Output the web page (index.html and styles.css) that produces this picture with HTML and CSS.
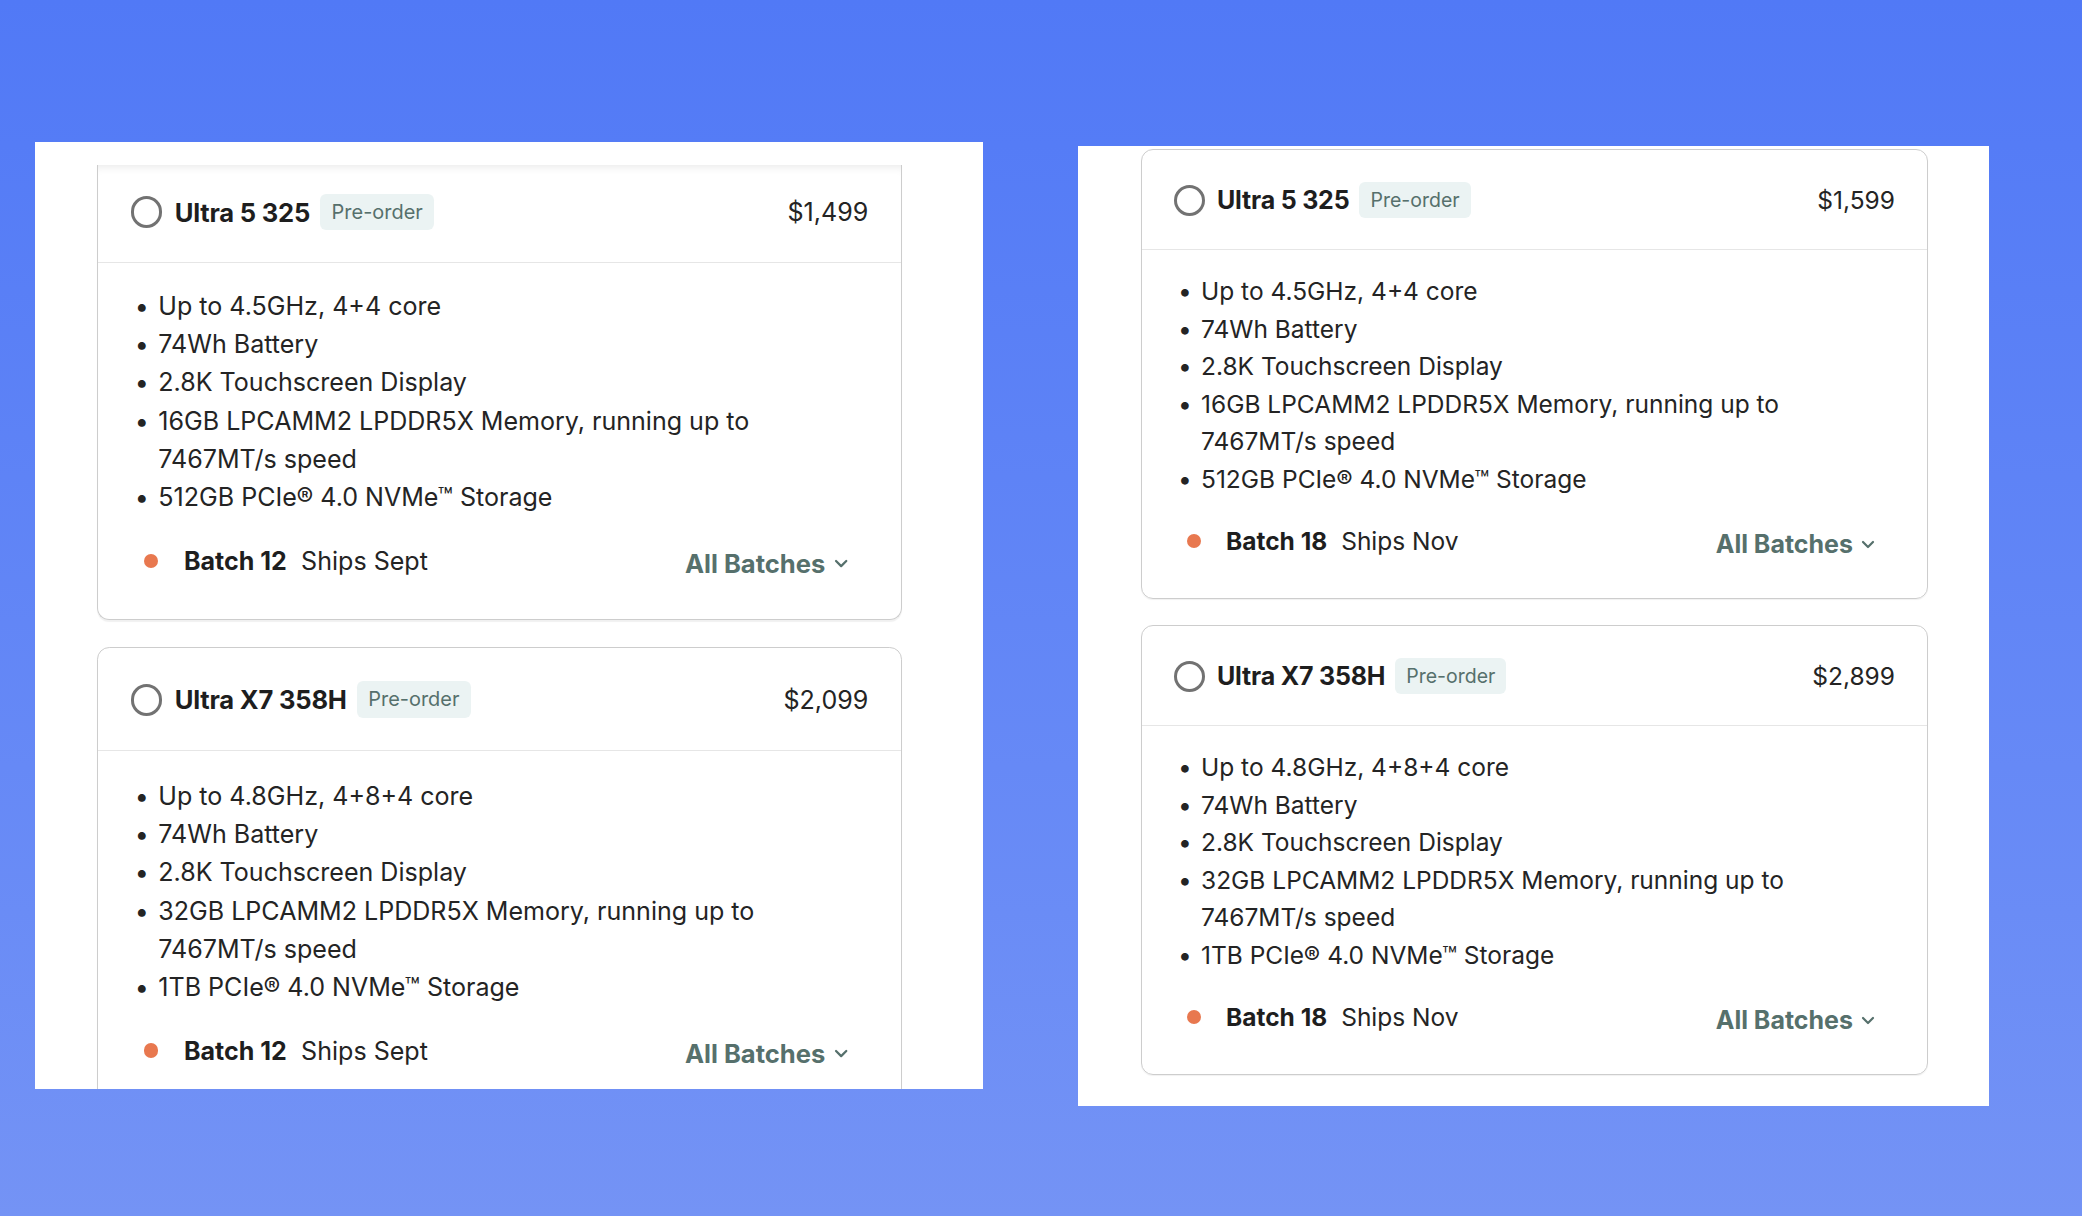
FILE: index.html
```html
<!DOCTYPE html>
<html lang="en">
<head>
    <meta charset="UTF-8">
    <title>Processor options</title>
    <link rel="stylesheet" href="styles.css">
</head>
<body>

<div class="stage">

    <!-- left screenshot: list scrolled a little, bottom card cut off -->
    <div class="panel panel-left">
        <div class="card card-cut">
            <div class="card-head">
                <span class="radio"></span>
                <span class="name">Ultra 5 325</span>
                <span class="badge">Pre-order</span>
                <span class="price">$1,499</span>
            </div>
            <div class="card-body">
                <ul class="specs">
                    <li>Up to 4.5GHz, 4+4 core</li>
                    <li>74Wh Battery</li>
                    <li>2.8K Touchscreen Display</li>
                    <li>16GB LPCAMM2 LPDDR5X Memory, running up to 7467MT/s speed</li>
                    <li>512GB PCIe® 4.0 NVMe™ Storage</li>
                </ul>
                <div class="batch">
                    <span class="dot"></span>
                    <b>Batch 12</b>
                    <span class="ships">Ships Sept</span>
                    <a class="all" href="#">All Batches
                        <svg width="14" height="9" viewBox="0 0 14 9"><path d="M2 2l5 5 5-5" fill="none" stroke="currentColor" stroke-width="2.2" stroke-linecap="round" stroke-linejoin="round"/></svg>
                    </a>
                </div>
            </div>
        </div>

        <div class="card">
            <div class="card-head">
                <span class="radio"></span>
                <span class="name">Ultra X7 358H</span>
                <span class="badge">Pre-order</span>
                <span class="price">$2,099</span>
            </div>
            <div class="card-body">
                <ul class="specs">
                    <li>Up to 4.8GHz, 4+8+4 core</li>
                    <li>74Wh Battery</li>
                    <li>2.8K Touchscreen Display</li>
                    <li>32GB LPCAMM2 LPDDR5X Memory, running up to 7467MT/s speed</li>
                    <li>1TB PCIe® 4.0 NVMe™ Storage</li>
                </ul>
                <div class="batch">
                    <span class="dot"></span>
                    <b>Batch 12</b>
                    <span class="ships">Ships Sept</span>
                    <a class="all" href="#">All Batches
                        <svg width="14" height="9" viewBox="0 0 14 9"><path d="M2 2l5 5 5-5" fill="none" stroke="currentColor" stroke-width="2.2" stroke-linecap="round" stroke-linejoin="round"/></svg>
                    </a>
                </div>
            </div>
        </div>
    </div>

    <!-- right screenshot -->
    <div class="panel panel-right">
        <div class="card">
            <div class="card-head">
                <span class="radio"></span>
                <span class="name">Ultra 5 325</span>
                <span class="badge">Pre-order</span>
                <span class="price">$1,599</span>
            </div>
            <div class="card-body">
                <ul class="specs">
                    <li>Up to 4.5GHz, 4+4 core</li>
                    <li>74Wh Battery</li>
                    <li>2.8K Touchscreen Display</li>
                    <li>16GB LPCAMM2 LPDDR5X Memory, running up to 7467MT/s speed</li>
                    <li>512GB PCIe® 4.0 NVMe™ Storage</li>
                </ul>
                <div class="batch">
                    <span class="dot"></span>
                    <b>Batch 18</b>
                    <span class="ships">Ships Nov</span>
                    <a class="all" href="#">All Batches
                        <svg width="14" height="9" viewBox="0 0 14 9"><path d="M2 2l5 5 5-5" fill="none" stroke="currentColor" stroke-width="2.2" stroke-linecap="round" stroke-linejoin="round"/></svg>
                    </a>
                </div>
            </div>
        </div>

        <div class="card">
            <div class="card-head">
                <span class="radio"></span>
                <span class="name">Ultra X7 358H</span>
                <span class="badge">Pre-order</span>
                <span class="price">$2,899</span>
            </div>
            <div class="card-body">
                <ul class="specs">
                    <li>Up to 4.8GHz, 4+8+4 core</li>
                    <li>74Wh Battery</li>
                    <li>2.8K Touchscreen Display</li>
                    <li>32GB LPCAMM2 LPDDR5X Memory, running up to 7467MT/s speed</li>
                    <li>1TB PCIe® 4.0 NVMe™ Storage</li>
                </ul>
                <div class="batch">
                    <span class="dot"></span>
                    <b>Batch 18</b>
                    <span class="ships">Ships Nov</span>
                    <a class="all" href="#">All Batches
                        <svg width="14" height="9" viewBox="0 0 14 9"><path d="M2 2l5 5 5-5" fill="none" stroke="currentColor" stroke-width="2.2" stroke-linecap="round" stroke-linejoin="round"/></svg>
                    </a>
                </div>
            </div>
        </div>
    </div>

</div>

</body>
</html>
```

FILE: styles.css
```css
*{
    margin: 0;
    padding: 0;
    box-sizing: border-box;
}
html, body{
    height: 100%;
}
body{
    background: linear-gradient(180deg, #5179f6 0%, #6a8cf6 75%, #7493f5 100%);
    font-family: Inter, "Noto Sans", sans-serif;
    color: #242424;
}
.stage{
    display: flex;
    align-items: flex-start;
    gap: 95px;
    padding: 142px 0 0 35px;
}
.panel{
    background: #fff;
    overflow: hidden;
}
.panel-left{
    width: 948px;
    height: 947px;
    padding: 23px 81px 0 62px;
}
/* left shot was taken a touch larger */
.panel-left .card{
    zoom: 1.023;
}
.panel-left .card + .card .card-head{
    padding-top: 33px;
}
.panel-left .card + .card .card-body{
    padding-top: 25px;
}
.panel-right{
    width: 911px;
    height: 960px;
    margin-top: 4px;
    padding: 3px 61px 0 63px;
}
.card{
    border: 1px solid #cdcdcd;
    border-radius: 12px;
    box-shadow: 0 1px 1px rgba(0,0,0,.06);
    margin-bottom: 26px;
}
/* top of this card is scrolled under a sticky bar */
.card-cut{
    border-top: 0;
    border-radius: 0 0 12px 12px;
    box-shadow: inset 0 8px 8px -6px rgba(0,0,0,.09), 0 1px 1px rgba(0,0,0,.06);
}
.card-head{
    display: flex;
    align-items: center;
    padding: 32px 32px 31px 32px;
    border-bottom: 1px solid #e6e6e6;
}
.card-cut .card-head{
    padding-top: 28px;
}
.radio{
    width: 31px;
    height: 31px;
    border: 3px solid #727272;
    border-radius: 50%;
    margin-right: 12px;
    flex-shrink: 0;
}
.name{
    font-size: 25px;
    font-weight: 700;
    color: #1e1e1e;
    letter-spacing: -0.2px;
}
.badge{
    margin-left: 10px;
    height: 36px;
    line-height: 36px;
    padding: 0 11px;
    border-radius: 6px;
    background: #ebf3f3;
    color: #56706c;
    font-size: 19.5px;
}
.price{
    margin-left: auto;
    font-size: 24.5px;
    color: #242424;
}
.card-body{
    padding: 23px 0 37px 0;
}
.specs{
    list-style: none;
    padding: 0 40px 0 36px;
}
.specs li{
    display: flex;
    max-width: 640px;
    font-size: 24.5px;
    line-height: 37.5px;
}
.specs li::before{
    content: "•";
    width: 23px;
    flex-shrink: 0;
}
.batch{
    display: flex;
    align-items: center;
    height: 40px;
    margin-top: 23px;
    padding: 0 52px 0 45px;
    font-size: 24.5px;
}
.dot{
    width: 14px;
    height: 14px;
    border-radius: 50%;
    background: #e8784f;
    margin-right: 25px;
}
.batch b{
    font-weight: 700;
    color: #1e1e1e;
}
.ships{
    margin-left: 14px;
}
.all{
    margin-left: auto;
    margin-top: 6px;
    display: flex;
    align-items: center;
    gap: 8px;
    font-size: 25px;
    font-weight: 700;
    color: #56706c;
    text-decoration: none;
}
```
